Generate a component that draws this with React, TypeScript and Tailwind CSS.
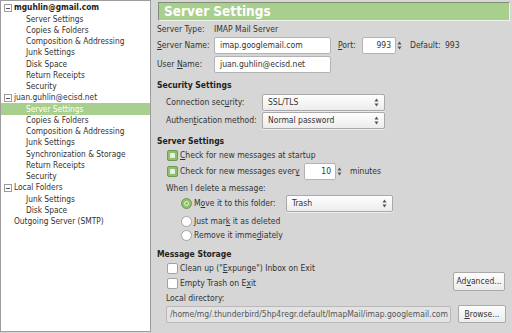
const font = { fontFamily: '"DejaVu Sans Condensed", "Liberation Sans", sans-serif' };

function U({ children }: { children: string }) {
  return <span className="underline underline-offset-1">{children}</span>;
}

function Arrows() {
  return (
    <svg width="5" height="9" viewBox="0 0 5 9" className="shrink-0">
      <path d="M2.5 0.5 L4.5 3.5 H0.5 Z" fill="#555" />
      <path d="M2.5 8.5 L4.5 5.5 H0.5 Z" fill="#555" />
    </svg>
  );
}

function Select({ value, w }: { value: string; w: string }) {
  return (
    <div
      className={`${w} h-[17px] flex items-center justify-between px-[5px] rounded-[2px] border border-[#a9a9a9] bg-gradient-to-b from-[#ffffff] to-[#ececec] shadow-[0_1px_0_#ececec]`}
    >
      <span>{value}</span>
      <Arrows />
    </div>
  );
}

function Spin({ value, w }: { value: string; w: string }) {
  return (
    <div className="flex items-center h-[17px]">
      <div
        className={`${w} h-[17px] flex items-center justify-end pr-[4px] bg-white border border-[#b3b3b3] rounded-[2px]`}
      >
        {value}
      </div>
      <div className="w-[7px] h-[17px] flex items-center justify-center">
        <Arrows />
      </div>
    </div>
  );
}

function Check({ on }: { on?: boolean }) {
  return on ? (
    <div className="size-[11px] shrink-0 rounded-[2px] border border-[#6d9a55] bg-[#8fc06e] flex items-center justify-center">
      <div className="size-[5px] bg-[#e6f2dc] rounded-[1px]" />
    </div>
  ) : (
    <div className="size-[11px] shrink-0 rounded-[2px] border border-[#a3a3a3] bg-white" />
  );
}

function Radio({ on }: { on?: boolean }) {
  return on ? (
    <div className="size-[11px] shrink-0 rounded-full border border-[#6d9a55] bg-[#8fc06e] flex items-center justify-center">
      <div className="size-[5px] rounded-full border border-[#e6f2dc]" />
    </div>
  ) : (
    <div className="size-[11px] shrink-0 rounded-full border border-[#a3a3a3] bg-white" />
  );
}

function Expander() {
  return (
    <div className="absolute left-[3px] top-[2px] size-[8px] border border-[#9c9c9c] bg-white flex items-center justify-center">
      <div className="w-[4px] h-px bg-[#555]" />
    </div>
  );
}

type Row = { t: string; lvl: 0 | 1; bold?: boolean; exp?: boolean; sel?: boolean };

const tree: Row[] = [
  { t: "mguhlin@gmail.com", lvl: 0, bold: true, exp: true },
  { t: "Server Settings", lvl: 1 },
  { t: "Copies & Folders", lvl: 1 },
  { t: "Composition & Addressing", lvl: 1 },
  { t: "Junk Settings", lvl: 1 },
  { t: "Disk Space", lvl: 1 },
  { t: "Return Receipts", lvl: 1 },
  { t: "Security", lvl: 1 },
  { t: "juan.guhlin@ecisd.net", lvl: 0, exp: true },
  { t: "Server Settings", lvl: 1, sel: true },
  { t: "Copies & Folders", lvl: 1 },
  { t: "Composition & Addressing", lvl: 1 },
  { t: "Junk Settings", lvl: 1 },
  { t: "Synchronization & Storage", lvl: 1 },
  { t: "Return Receipts", lvl: 1 },
  { t: "Security", lvl: 1 },
  { t: "Local Folders", lvl: 0, exp: true },
  { t: "Junk Settings", lvl: 1 },
  { t: "Disk Space", lvl: 1 },
  { t: "Outgoing Server (SMTP)", lvl: 0 },
];

export default function App() {
  return (
    <div
      className="w-[512px] h-[333px] bg-[#d6d6d6] flex text-[8.5px] text-[#333333] leading-none overflow-hidden"
      style={font}
    >
      <div className="w-[151px] h-[332px] bg-white border border-[#9d9d9d] pt-px text-[8.3px]">
        {tree.map((r, i) => (
          <div
            key={i}
            className={`relative h-[11.26px] flex items-center ${r.lvl ? "pl-[25px]" : "pl-[13px]"} ${
              r.sel ? "bg-[#a8cf8d] text-white" : ""
            } ${r.bold ? "font-bold text-[#222]" : ""}`}
          >
            {r.exp && <Expander />}
            {r.t}
          </div>
        ))}
      </div>

      <div className="flex-1 flex flex-col pl-[6px] pr-[2px]">
        <div className="mt-[2px] ml-px h-[19px] flex items-center pl-[5px] bg-[#a8cf8d] border-t border-l border-[#7f8f74] border-r border-b border-r-[#eef3ea] border-b-[#eef3ea] text-white font-bold text-[13.5px]">
          Server Settings
        </div>

        <div className="mt-[2px] h-[12px] flex items-center">
          <span className="w-[57px]">Server Type:</span>
          <span>IMAP Mail Server</span>
        </div>

        <div className="mt-[2px] h-[17px] flex items-center">
          <span className="w-[57px]">
            <U>S</U>erver Name:
          </span>
          <div className="w-[117px] h-[17px] flex items-center px-[5px] bg-white border border-[#b3b3b3] rounded-[2px]">
            imap.googlemail.com
          </div>
          <span className="ml-[7px] w-[24px]">
            <U>P</U>ort:
          </span>
          <Spin value="993" w="w-[34px]" />
          <span className="ml-[7px] w-[35px]">Default:</span>
          <span>993</span>
        </div>

        <div className="mt-[2px] h-[17px] flex items-center">
          <span className="w-[57px]">
            User <U>N</U>ame:
          </span>
          <div className="w-[117px] h-[17px] flex items-center px-[5px] bg-white border border-[#b3b3b3] rounded-[2px]">
            juan.guhlin@ecisd.net
          </div>
        </div>

        <div className="mt-[6px] h-[12px] flex items-center font-bold text-[#222]">Security Settings</div>

        <div className="mt-[3px] h-[17px] flex items-center pl-[9px]">
          <span className="w-[96px]">
            Connection sec<U>u</U>rity:
          </span>
          <Select value="SSL/TLS" w="w-[123px]" />
        </div>
        <div className="mt-px h-[17px] flex items-center pl-[9px]">
          <span className="w-[96px]">
            Authen<U>t</U>ication method:
          </span>
          <Select value="Normal password" w="w-[123px]" />
        </div>

        <div className="mt-[6px] h-[12px] flex items-center font-bold text-[#222]">Server Settings</div>

        <div className="mt-[2px] h-[12px] flex items-center pl-[10px] gap-[1px]">
          <Check on />
          <span className="ml-[1px]">
            <U>C</U>heck for new messages at startup
          </span>
        </div>

        <div className="mt-[2px] h-[17px] flex items-center pl-[10px]">
          <Check on />
          <span className="ml-[2px] w-[124px]">
            Check for new messages ever<U>y</U>
          </span>
          <Spin value="10" w="w-[32px]" />
          <span className="ml-[7px]">minutes</span>
        </div>

        <div className="mt-[2px] h-[12px] flex items-center pl-[9px]">When I delete a message:</div>

        <div className="mt-px h-[17px] flex items-center pl-[24px]">
          <Radio on />
          <span className="ml-[2px] w-[92px]">
            M<U>o</U>ve it to this folder:
          </span>
          <Select value="Trash" w="w-[107px]" />
        </div>

        <div className="mt-[3px] h-[12px] flex items-center pl-[24px]">
          <Radio />
          <span className="ml-[2px]">
            Just mar<U>k</U> it as deleted
          </span>
        </div>
        <div className="mt-[2px] h-[12px] flex items-center pl-[24px]">
          <Radio />
          <span className="ml-[2px]">
            Remove it imme<U>d</U>iately
          </span>
        </div>

        <div className="mt-[7px] h-[12px] flex items-center font-bold text-[#222]">Message Storage</div>

        <div className="flex items-end justify-between">
          <div className="flex flex-col">
            <div className="mt-[2px] h-[12px] flex items-center pl-[10px]">
              <Check />
              <span className="ml-[2px]">
                Clean up ("<U>E</U>xpunge") Inbox on Exit
              </span>
            </div>
            <div className="mt-[3px] h-[12px] flex items-center pl-[10px]">
              <Check />
              <span className="ml-[2px]">
                Empty Trash on E<U>x</U>it
              </span>
            </div>
          </div>
          <div className="mr-[5px] mb-[-2px] w-[52px] h-[19px] flex items-center justify-center bg-gradient-to-b from-[#fdfdfd] to-[#ececec] border border-[#a9a9a9] rounded-[2px]">
            Ad<U>v</U>anced...
          </div>
        </div>

        <div className="mt-[3px] h-[12px] flex items-center pl-[9px]">Local directory:</div>

        <div className="mt-px flex items-center pl-[9px]">
          <div className="w-[285px] h-[17px] flex items-center px-[3px] bg-[#e3e3e3] border border-[#b9b9b9] rounded-[2px] text-[#555]">
            /home/mg/.thunderbird/5hp4regr.default/ImapMail/imap.googlemail.com
          </div>
          <div className="ml-[7px] w-[48px] h-[18px] flex items-center justify-center bg-gradient-to-b from-[#fdfdfd] to-[#ececec] border border-[#a9a9a9] rounded-[2px]">
            <U>B</U>rowse...
          </div>
        </div>
      </div>
    </div>
  );
}
